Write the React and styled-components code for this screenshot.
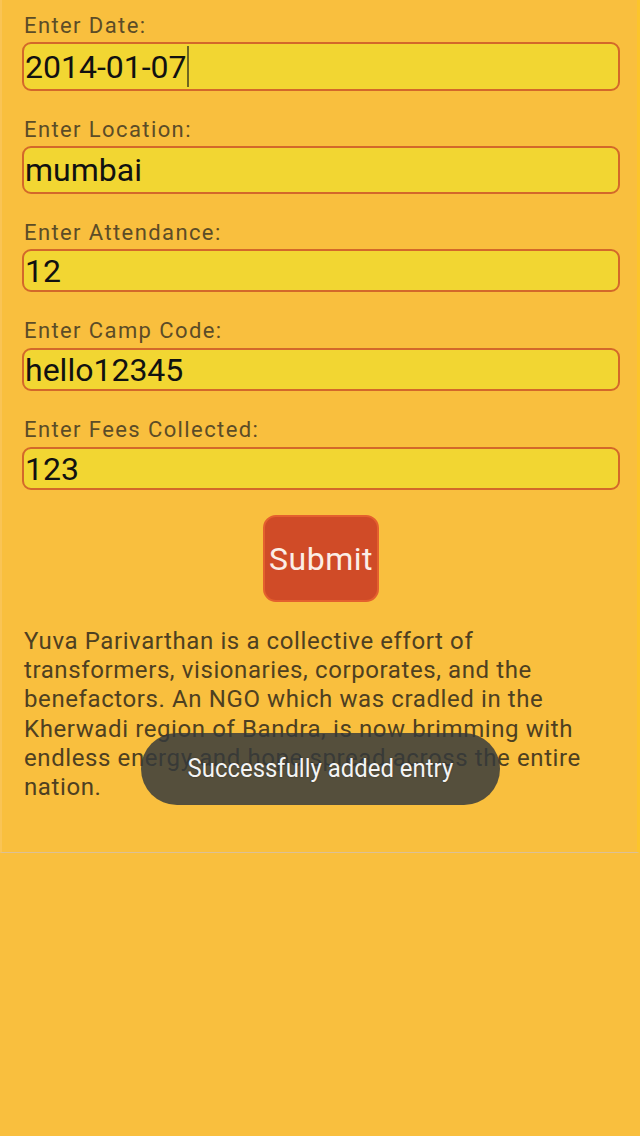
import React from 'react';
import styled, { createGlobalStyle } from 'styled-components';

const GlobalStyle = createGlobalStyle`
  html, body {
    margin: 0;
    padding: 0;
    background: #f9bf3e;
  }
  body {
    font-family: Roboto, "Liberation Sans", sans-serif;
  }
`;

const Screen = styled.div`
  position: relative;
  width: 640px;
  height: 1136px;
  background: #f9bf3e;
  overflow: hidden;
`;

const Panel = styled.div`
  box-sizing: border-box;
  height: 853px;
  padding: 12px 17px 0 22px;
  border-left: 2px solid #fac455;
  border-right: 3px solid #fcc52c;
  border-bottom: 1px solid #dcc095;
`;

const Field = styled.div`
  display: flex;
  flex-direction: column;
  margin-bottom: 25px;
`;

const Label = styled.label`
  font-size: 22px;
  line-height: 26px;
  color: #5c4c27;
  letter-spacing: 1.4px;
  transform: translateY(1px);
`;

const InputBox = styled.div`
  box-sizing: border-box;
  display: flex;
  align-items: center;
  height: ${p => p.h}px;
  margin-top: ${p => p.gap || 4}px;
  margin-left: -2px;
  padding-left: 1px;
  background: #f2d632;
  border: 2px solid #d3682a;
  border-radius: 9px;
  font-size: 32px;
  color: #111;
`;

const Caret = styled.span`
  width: 2px;
  align-self: stretch;
  margin: 2px 0;
  background: #6e6520;
`;

const ButtonRow = styled.div`
  display: flex;
  justify-content: center;
  margin-top: 5px;
  padding-right: 2px;
`;

const SubmitButton = styled.button`
  width: 116px;
  height: 87px;
  background: #d04b27;
  border: 2px solid #e4602e;
  border-radius: 13px;
  color: #fbeee6;
  font-family: Roboto, "Liberation Sans", sans-serif;
  font-size: 32px;
  letter-spacing: 0.5px;
  padding: 0;
`;

const About = styled.p`
  margin: 25px 0 0 0;
  font-size: 24px;
  line-height: 29.2px;
  color: #4e4021;
  letter-spacing: 0.6px;
  white-space: nowrap;
`;

const Toast = styled.div`
  position: absolute;
  left: 141px;
  top: 733px;
  width: 359px;
  height: 72px;
  border-radius: 36px;
  background: rgba(52, 56, 60, 0.83);
  display: flex;
  align-items: center;
  justify-content: center;
`;

const ToastText = styled.span`
  display: inline-block;
  color: #f4f4f4;
  font-size: 26px;
  transform: scaleX(0.92);
  white-space: nowrap;
  margin-top: -2px;
  text-shadow: 0 0 2px rgba(0, 0, 0, 0.4);
`;

const fields = [
  { label: 'Enter Date:', value: '2014-01-07', h: 49, caret: true },
  { label: 'Enter Location:', value: 'mumbai', h: 48 },
  { label: 'Enter Attendance:', value: '12', h: 43 },
  { label: 'Enter Camp Code:', value: 'hello12345', h: 43, gap: 5 },
  { label: 'Enter Fees Collected:', value: '123', h: 43, gap: 5 },
];

const aboutLines = [
  'Yuva Parivarthan is a collective effort of',
  'transformers, visionaries, corporates, and the',
  'benefactors. An NGO which was cradled in the',
  'Kherwadi region of Bandra, is now brimming with',
  'endless energy and hope spread across the entire',
  'nation.',
];

export default function App() {
  return (
    <Screen>
      <GlobalStyle />
      <Panel>
        {fields.map(f => (
          <Field key={f.label}>
            <Label>{f.label}</Label>
            <InputBox h={f.h} gap={f.gap}>
              {f.value}
              {f.caret && <Caret />}
            </InputBox>
          </Field>
        ))}
        <ButtonRow>
          <SubmitButton>Submit</SubmitButton>
        </ButtonRow>
        <About>
          {aboutLines.map((line, i) => (
            <React.Fragment key={i}>
              {line}
              {i < aboutLines.length - 1 && <br />}
            </React.Fragment>
          ))}
        </About>
      </Panel>
      <Toast>
        <ToastText>Successfully added entry</ToastText>
      </Toast>
    </Screen>
  );
}
